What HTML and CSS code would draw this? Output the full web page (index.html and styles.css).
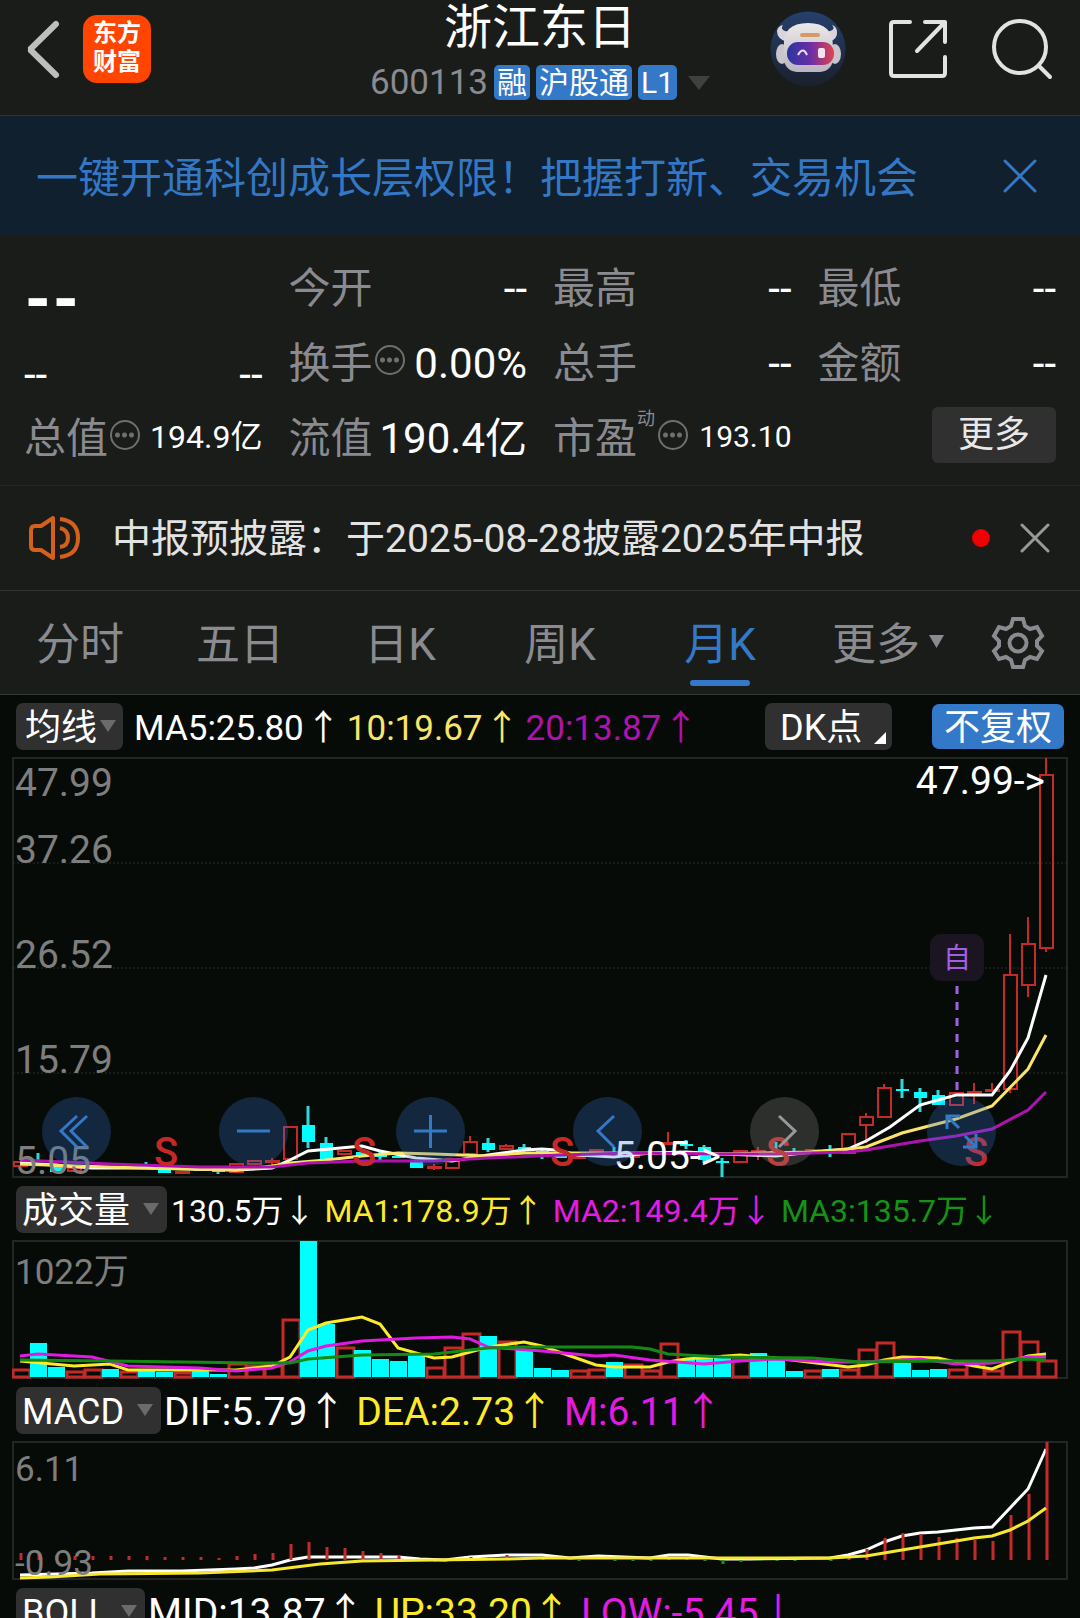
FILE: index.html
```html
<!DOCTYPE html>
<html lang="zh-CN">
<head>
    <meta charset="UTF-8">
    <meta name="viewport" content="width=device-width, initial-scale=1.0">
    <title>浙江东日 600113</title>
    <link rel="stylesheet" href="styles.css">
</head>
<body>

    <div class="page">
        <!-- 顶部导航 -->
        <header class="topbar">
            <div class="topbar-left">
                <button class="icon-btn" aria-label="返回">
                    <svg width="36" height="60" viewBox="0 0 36 60"><path d="M31 5 L5 30.500 L31 56" fill="none" stroke="#bebebe" stroke-width="6" stroke-linejoin="bevel" stroke-linecap="round"/></svg>
                </button>
                <a class="app-logo" href="#">东方<br>财富</a>
            </div>
            <div class="topbar-title">
                <h1>浙江东日</h1>
                <div class="stock-code">
                    <span class="code">600113</span>
                    <span class="tag">融</span>
                    <span class="tag">沪股通</span>
                    <span class="tag">L1</span>
                    <svg class="code-caret" width="22" height="14" viewBox="0 0 22 14"><path d="M0 0H22L11 14Z" fill="#40413f"/></svg>
                </div>
            </div>
            <div class="topbar-right">
                <button class="icon-btn" aria-label="智能助手">
                    <svg width="76" height="76" viewBox="0 0 76 76">
                        <defs>
                            <linearGradient id="sky" x1="0" y1="0" x2="0" y2="1"><stop offset="0" stop-color="#26406c"/><stop offset="1" stop-color="#1a202c"/></linearGradient>
                            <linearGradient id="visor" x1="0" y1="0" x2="1" y2="0"><stop offset="0" stop-color="#2b35a0"/><stop offset=".5" stop-color="#6a2fa6"/><stop offset="1" stop-color="#e0434f"/></linearGradient>
                            <linearGradient id="shell" x1="0" y1="0" x2="0" y2="1"><stop offset="0" stop-color="#ece9ea"/><stop offset="1" stop-color="#b9b5c0"/></linearGradient>
                        </defs>
                        <circle cx="38" cy="38" r="37.500" fill="url(#sky)"/>
                        <path d="M13 14 Q10 18 15 20 L20 21 L17 31 Q7 28 7 20 Q8 15 13 14Z" fill="#d9d5da"/>
                        <path d="M62 14 Q66 18 60 20 L56 21 L59 31 Q68 28 67 20 Q66 15 62 14Z" fill="#d9d5da"/>
                        <ellipse cx="12" cy="43" rx="6" ry="10" fill="#c9c5cc"/>
                        <ellipse cx="65" cy="43" rx="6" ry="10" fill="#c9c5cc"/>
                        <path d="M14 36 Q13 24 19 18 Q25 12 38 12 Q51 12 57 18 Q63 24 63 36 L64 46 Q62 60 50 61 H27 Q15 60 13 46Z" fill="url(#shell)"/>
                        <rect x="30" y="22" width="20" height="4" rx="2" fill="#d69a66"/>
                        <rect x="17" y="31" width="47" height="23" rx="11" fill="url(#visor)"/>
                        <path d="M28 44 Q33 35 37 44" fill="none" stroke="#f1dcf6" stroke-width="2"/>
                        <rect x="48" y="37" width="7" height="10" rx="2" fill="#f6e3f0"/>
                    </svg>
                </button>
                <button class="icon-btn" aria-label="分享">
                    <svg width="60" height="60" viewBox="0 0 60 60" fill="none" stroke="#e2e2e2" stroke-width="4" stroke-linecap="round" stroke-linejoin="round"><path d="M22 3H6Q3 3 3 6V54Q3 57 6 57H54Q57 57 57 54V38M37 3H57V23M57 3L29 32"/></svg>
                </button>
                <button class="icon-btn" aria-label="搜索">
                    <svg width="64" height="64" viewBox="0 0 64 64" fill="none" stroke="#e2e2e2" stroke-width="4" stroke-linecap="round"><circle cx="30" cy="30" r="26"/><path d="M49 49L60 60"/></svg>
                </button>
            </div>
        </header>

        <!-- 开户提示 -->
        <div class="promo">
            <a href="#">一键开通科创成长层权限！把握打新、交易机会</a>
            <button class="icon-btn" aria-label="关闭">
                <svg width="34" height="34" viewBox="0 0 34 34" stroke="#3477c4" stroke-width="3" stroke-linecap="round"><path d="M2 2L32 32M32 2L2 32"/></svg>
            </button>
        </div>

        <!-- 行情数据 -->
        <section class="quote">
            <div class="cell cell-price"><span class="price">--</span></div>
            <div class="cell"><span class="label">今开</span><span class="value">--</span></div>
            <div class="cell"><span class="label">最高</span><span class="value">--</span></div>
            <div class="cell"><span class="label">最低</span><span class="value">--</span></div>

            <div class="cell cell-price"><span class="value">--</span><span class="value">--</span></div>
            <div class="cell"><span class="label">换手<i class="dots"></i></span><span class="value">0.00%</span></div>
            <div class="cell"><span class="label">总手</span><span class="value">--</span></div>
            <div class="cell"><span class="label">金额</span><span class="value">--</span></div>

            <div class="cell"><span class="label">总值<i class="dots"></i></span><span class="value small">194.9亿</span></div>
            <div class="cell"><span class="label">流值</span><span class="value">190.4亿</span></div>
            <div class="cell"><span class="label">市盈<sup>动</sup><i class="dots"></i></span><span class="value smaller">193.10</span></div>
            <div class="cell cell-more"><button class="more-btn">更多</button></div>
        </section>

        <!-- 公告 -->
        <div class="notice">
            <svg width="52" height="46" viewBox="0 0 52 46" fill="none" stroke="#d4601c" stroke-width="4" stroke-linejoin="round"><path d="M24 3V43L12 35H6Q2 35 2 31V15Q2 11 6 11H12Z"/><path d="M31 13Q39 15 39 23T31 32M31 4Q49 6 49 23T31 42"/></svg>
            <a href="#">中报预披露：于2025-08-28披露2025年中报</a>
            <span class="red-dot"></span>
            <button class="icon-btn" aria-label="关闭公告">
                <svg width="30" height="30" viewBox="0 0 30 30" stroke="#999" stroke-width="3" stroke-linecap="round"><path d="M2 2L28 28M28 2L2 28"/></svg>
            </button>
        </div>

        <!-- 周期切换 -->
        <nav class="tabs">
            <button class="tab">分时</button>
            <button class="tab">五日</button>
            <button class="tab">日K</button>
            <button class="tab">周K</button>
            <button class="tab active">月K</button>
            <button class="tab tab-more">更多<svg width="15" height="13" viewBox="0 0 15 13"><path d="M0 0H15L7.500 13Z" fill="#8a8a90"/></svg></button>
            <button class="tab-setting" aria-label="设置">
                <svg width="54" height="54" viewBox="0 0 54 54" fill="none" stroke="#8a8a90" stroke-width="4"><path d="M22 3H32L34 10L39 13L46 11L51 20L46 25V30L51 35L46 43L39 41L34 44L32 51H22L20 44L15 41L8 43L3 35L8 30V25L3 20L8 11L15 13L20 10Z"/><circle cx="27" cy="27" r="8.500"/></svg>
            </button>
        </nav>

        <main class="charts">
            <!-- K线 -->
            <div class="legend legend-ma">
                <button class="pick pick-ma">均线<i class="caret"></i></button>
                <span class="c-white">MA5:25.80<b>↑</b></span>
                <span class="c-lemon">10:19.67<b>↑</b></span>
                <span class="c-purple">20:13.87<b>↑</b></span>
                <button class="pick pick-dk">DK点</button>
                <button class="pick pick-blue">不复权</button>
            </div>
            <div class="plot">
                <svg id="price-chart" viewBox="12 757 1056 421"></svg>
                <div class="chart-tools">
                    <button aria-label="最左"><svg viewBox="0 0 69 69"><path d="M35 19L19 34L35 50M45 19L29 34L45 50"/></svg></button>
                    <button aria-label="缩小"><svg viewBox="0 0 69 69"><path d="M18 34H51"/></svg></button>
                    <button aria-label="放大"><svg viewBox="0 0 69 69"><path d="M18 34H51M34.500 18V51"/></svg></button>
                    <button aria-label="左移"><svg viewBox="0 0 69 69"><path d="M41 19L25 34L41 50"/></svg></button>
                    <button aria-label="右移" class="off"><svg viewBox="0 0 69 69"><path d="M29 19L45 34L29 50"/></svg></button>
                    <button aria-label="全屏"><svg viewBox="0 0 69 69"><path d="M33 19H20V32M20 19L32 31M36 50H49V37M49 50L38 39"/></svg></button>
                </div>
            </div>

            <!-- 成交量 -->
            <div class="legend legend-vol">
                <button class="pick">成交量<i class="caret"></i></button>
                <span class="c-white">130.5万<b>↓</b></span>
                <span class="c-yellow">MA1:178.9万<b>↑</b></span>
                <span class="c-magenta">MA2:149.4万<b>↓</b></span>
                <span class="c-green">MA3:135.7万<b>↓</b></span>
            </div>
            <div class="plot"><svg id="volume-chart" viewBox="12 1240 1056 139"></svg></div>

            <!-- MACD -->
            <div class="legend">
                <button class="pick">MACD<i class="caret"></i></button>
                <span class="c-white">DIF:5.79<b>↑</b></span>
                <span class="c-yellow">DEA:2.73<b>↑</b></span>
                <span class="c-magenta">M:6.11<b>↑</b></span>
            </div>
            <div class="plot"><svg id="macd-chart" viewBox="12 1441 1056 139"></svg></div>

            <!-- BOLL -->
            <div class="legend">
                <button class="pick">BOLL<i class="caret"></i></button>
                <span class="c-white">MID:13.87<b>↑</b></span>
                <span class="c-yellow">UP:33.20<b>↑</b></span>
                <span class="c-magenta">LOW:-5.45<b>↓</b></span>
            </div>
        </main>
    </div>

    <script>
        // --- 图表公共设置 ---
        const STEP = 18;
        const FIRST_X = 20;
        const RED = '#c62a27';
        const CYAN = '#00ffff';
        const xOf = (i) => FIRST_X + i * STEP;

        // K线：[颜色, 实体上沿, 实体下沿, 最高, 最低]
        const candles = [
            ['r', 1162, 1166], ['c', 1160, 1162, 1153], ['c', 1166, 1172], ['r', 1168, 1171], ['c', 1167, 1168],
            ['c', 1167, 1169], ['c', 1167, 1168], ['c', 1166, 1168, 1162], ['c', 1169, 1173], ['r', 1172, 1173],
            ['c', 1170, 1171], ['c', 1171, 1172, 1171, 1174], ['r', 1164, 1172], ['r', 1161, 1164], ['r', 1161, 1162, 1158, 1165],
            ['r', 1127, 1159], ['c', 1125, 1142, 1106, 1148], ['c', 1143, 1160, 1137], ['r', 1151, 1154], ['c', 1152, 1156],
            ['c', 1155, 1157, 1152, 1160], ['c', 1156, 1158], ['c', 1162, 1168], ['r', 1167, 1168, 1164, 1170], ['r', 1159, 1168],
            ['r', 1142, 1154, 1136], ['c', 1143, 1150, 1138, 1152], ['r', 1146, 1149, 1144], ['c', 1147, 1149, 1144, 1153], ['c', 1151, 1153, 1150, 1159],
            ['c', 1156, 1158], ['r', 1157, 1158], ['r', 1150, 1152], ['c', 1152, 1155, 1147], ['r', 1156, 1157],
            ['r', 1153, 1154], ['r', 1143, 1144, 1132], ['c', 1144, 1146, 1140, 1149], ['c', 1147, 1160, 1145, 1163], ['c', 1161, 1163, 1158, 1177],
            ['r', 1151, 1162], ['r', 1151, 1152, 1147, 1160], ['c', 1151, 1153, 1142], ['c', 1151, 1153, 1148], ['r', 1150, 1151],
            ['c', 1150, 1152, 1145, 1157], ['r', 1134, 1153], ['r', 1117, 1125, 1113, 1143], ['r', 1088, 1117, 1084], ['c', 1089, 1091, 1079, 1098],
            ['c', 1092, 1098, 1088, 1112], ['c', 1095, 1105, 1090], ['r', 1093, 1105], ['r', 1092, 1093, 1083, 1104], ['r', 1090, 1091, 1083],
            ['r', 975, 1089, 934, 1093], ['r', 944, 985, 917, 997], ['r', 775, 948, 758, 952]
        ];

        // 成交量：[颜色, 柱顶]
        const volumes = [
            ['r', 1370], ['c', 1343], ['c', 1367], ['r', 1372], ['r', 1370], ['c', 1369], ['r', 1372], ['c', 1371], ['c', 1372], ['r', 1373],
            ['c', 1371], ['c', 1374], ['r', 1364], ['r', 1366], ['r', 1365], ['r', 1320], ['c', 1241], ['c', 1324], ['r', 1348], ['c', 1350],
            ['c', 1359], ['c', 1361], ['c', 1353], ['r', 1368], ['r', 1348], ['r', 1334], ['c', 1336], ['r', 1342], ['c', 1350], ['c', 1368],
            ['c', 1370], ['r', 1371], ['r', 1370], ['c', 1362], ['r', 1365], ['r', 1371], ['r', 1344], ['c', 1359], ['c', 1358], ['c', 1356],
            ['r', 1360], ['c', 1353], ['c', 1360], ['c', 1371], ['r', 1371], ['c', 1369], ['r', 1370], ['r', 1350], ['r', 1343], ['c', 1363],
            ['c', 1370], ['c', 1369], ['r', 1370], ['r', 1363], ['r', 1371], ['r', 1332], ['r', 1342], ['r', 1361]
        ];

        // MACD柱的端点，零轴在1560
        const ZERO = 1560;
        const macdBars = [
            1553, 1553, 1555, 1556, 1556, 1556, 1556, 1556, 1557, 1557, 1557, 1558, 1556, 1554, 1553,
            1544, 1542, 1547, 1548, 1551, 1553, 1555, 1560, 1562, 1561, 1557, 1557, 1555, 1557, 1558,
            1560, 1561, 1560, 1561, 1561, 1561, 1557, 1558, 1561, 1564, 1562, 1561, 1561, 1561, 1560,
            1561, 1557, 1549, 1538, 1533, 1534, 1537, 1538, 1540, 1541, 1515, 1494, 1442
        ];

        // --- 绘图函数 ---
        const line = (points, color) =>
            `<polyline points="${points}" fill="none" stroke="${color}" stroke-width="3"/>`;

        const vline = (x, y1, y2, color, width) =>
            `<path d="M${x} ${y1}V${y2}" stroke="${color}" stroke-width="${width}"/>`;

        const text = (x, y, str, cls) => `<text x="${x}" y="${y}" class="${cls}">${str}</text>`;

        const frame = (y, h) =>
            `<rect x="13" y="${y}" width="1054" height="${h}" fill="none" stroke="#232623" stroke-width="2"/>`;

        function candle([type, top, bottom, high = top, low = bottom], i) {
            const x = xOf(i);
            if (type === 'c') {
                return vline(x, high, low, '#2fd9d9', 3) +
                    `<rect x="${x - 6}" y="${top}" width="13" height="${bottom - top}" fill="${CYAN}"/>`;
            }
            return vline(x, high, top, RED, 2) + vline(x, bottom, low, RED, 2) +
                `<rect x="${x - 6}" y="${top}" width="13" height="${bottom - top}" fill="none" stroke="${RED}" stroke-width="2"/>`;
        }

        function volumeBar([type, top], i) {
            const x = xOf(i);
            if (type === 'c') {
                return `<rect x="${x - 8}" y="${top}" width="17" height="${1377 - top}" fill="${CYAN}"/>`;
            }
            return `<rect x="${x - 7}" y="${top}" width="17" height="${1377 - top}" fill="none" stroke="${RED}" stroke-width="3"/>`;
        }

        // --- K线图 ---
        let price = frame(758, 419);
        [863, 968, 1073].forEach((y) => {
            price += `<path d="M13 ${y}H1067" stroke="#2b2e2b" stroke-dasharray="2 2"/>`;
        });
        price += candles.map(candle).join('');
        price += line('20,1163 56,1165 92,1168 146,1168 200,1169 236,1170 272,1168 290,1160 308,1151 362,1146 380,1151 416,1158 452,1161 488,1155 524,1150 542,1149 556,1150 578,1155 614,1157 650,1153 686,1152 722,1154 776,1156 812,1152 848,1149 866,1141 890,1127 920,1105 956,1095 992,1095 1010,1071 1028,1038 1046,975', '#fff');
        price += line('20,1164 74,1166 182,1169 236,1170 272,1166 290,1163 326,1160 362,1156 398,1153 434,1154 488,1156 524,1153 580,1153 650,1153 722,1154 812,1152 848,1149 866,1147 902,1133 956,1119 992,1106 1028,1069 1046,1035', '#fbe46a');
        price += line('20,1160 110,1164 200,1167 272,1167 308,1163 362,1161 434,1161 488,1158 560,1155 632,1153 722,1154 776,1154 848,1152 866,1150 920,1141 956,1136 992,1129 1028,1110 1046,1092', '#b012b0');
        price += '<path d="M957 986V1092" stroke="#a45ee5" stroke-width="3" stroke-dasharray="8 8"/>';
        price += '<rect x="930" y="934" width="54" height="47" rx="11" fill="#1b1522"/>';
        price += text(957, 968, '自', 'mark');
        price += [166, 364, 562, 778, 976].map((x) => text(x, 1166, 'S', 'sell')).join('');
        price += text(15, 796, '47.99', 'axis') + text(15, 863, '37.26', 'axis') +
            text(15, 968, '26.52', 'axis') + text(15, 1073, '15.79', 'axis') + text(15, 1174, '5.05', 'axis');
        price += text(1045, 794, '47.99-&gt;', 'peak') + text(721, 1169, '5.05-&gt;', 'peak');
        document.getElementById('price-chart').innerHTML = price;

        // --- 成交量图 ---
        let volume = frame(1241, 137) + volumes.map(volumeBar).join('');
        volume += line('20,1361 74,1366 110,1364 128,1370 200,1370 236,1370 272,1366 290,1357 308,1330 326,1323 362,1317 380,1324 398,1348 434,1358 452,1357 470,1352 488,1347 524,1342 542,1346 596,1365 614,1367 650,1367 668,1362 686,1359 740,1355 776,1358 848,1367 866,1365 884,1360 902,1357 938,1358 974,1366 992,1369 1010,1362 1028,1356 1046,1354', '#fdea2a');
        volume += line('20,1356 38,1354 92,1357 128,1366 200,1368 236,1371 272,1368 290,1362 308,1351 326,1346 362,1341 416,1338 452,1337 470,1339 488,1347 542,1351 596,1356 614,1355 650,1360 704,1364 740,1361 776,1359 830,1362 866,1362 920,1359 956,1364 992,1363 1028,1357 1046,1357', '#e01be0');
        volume += line('20,1360 110,1361 182,1362 254,1363 290,1363 308,1359 362,1355 434,1354 488,1348 524,1347 632,1347 650,1349 668,1354 722,1357 812,1358 860,1362 938,1361 992,1361 1028,1359 1046,1360', '#138a13');
        volume += text(15, 1284, '1022万', 'axis axis-small');
        document.getElementById('volume-chart').innerHTML = volume;

        // --- MACD图 ---
        let macd = frame(1442, 137);
        macd += line('20,1575 92,1573 128,1571 182,1571 236,1569 254,1568 272,1565 290,1560 308,1557 398,1557 420,1559 445,1560 470,1557 506,1555 542,1555 570,1558 598,1556 650,1558 669,1555 688,1555 722,1559 750,1559 830,1558 848,1555 866,1550 884,1542 902,1536 920,1533 938,1532 974,1528 992,1527 1010,1508 1028,1489 1046,1449', '#fff');
        macd += macdBars.map((y, i) => vline(xOf(i) + 1, y, ZERO, y > ZERO ? '#17911a' : RED, 3)).join('');
        macd += line('20,1578 50,1577 100,1574 200,1573 272,1570 320,1564 362,1561 434,1560 506,1559 542,1558 830,1558 866,1556 902,1550 938,1544 974,1538 992,1536 1010,1530 1028,1521 1046,1508', '#f7e733');
        macd += text(15, 1481, '6.11', 'axis axis-small') + text(15, 1575, '-0.93', 'axis axis-small');
        document.getElementById('macd-chart').innerHTML = macd;
    </script>
</body>
</html>
```
FILE: styles.css
```css
/* 全体样式 */
* {
    box-sizing: border-box;
}

body {
    margin: 0;
    background-color: #191c19;
    color: #fff;
    font-family: Roboto, "Noto Sans CJK SC", sans-serif;
    line-height: 1;
}

button {
    font-family: inherit;
    line-height: 1;
    border: none;
    padding: 0;
    background: none;
    cursor: pointer;
}

a {
    color: inherit;
    text-decoration: none;
}

svg {
    display: block;
}

.page {
    height: 100vh;
    overflow: hidden;
}

/* 顶部导航 */
.topbar {
    display: grid;
    grid-template-columns: 1fr auto 1fr;
    height: 116px;
    border-bottom: 1px solid #30332f;
}

.topbar-left,
.topbar-right {
    display: flex;
    align-items: center;
    height: 97px;
}

.topbar-left {
    padding-left: 25px;
    gap: 22px;
}

.topbar-right {
    justify-content: flex-end;
    padding-right: 26px;
    gap: 42px;
}

.app-logo {
    width: 68px;
    height: 68px;
    padding-top: 4px;
    border-radius: 14px;
    background-color: #ff4500;
    font-size: 24px;
    font-weight: bold;
    line-height: 29px;
    text-align: center;
}

.topbar-title {
    text-align: center;
}

h1 {
    margin: 0;
    font-size: 48px;
    font-weight: normal;
    line-height: 56px;
}

.stock-code {
    display: flex;
    align-items: center;
    justify-content: center;
    gap: 6px;
    margin-top: 9px;
}

.code {
    color: #8a8a90;
    font-size: 35px;
}

.tag {
    height: 35px;
    padding: 0 3px;
    border-radius: 5px;
    background-color: #3478c8;
    font-size: 30px;
    line-height: 35px;
}

.code-caret {
    margin-left: 5px;
}

/* 开户提示 */
.promo {
    display: flex;
    align-items: center;
    justify-content: space-between;
    height: 120px;
    padding: 0 43px 0 36px;
    background-color: #10202e;
    color: #3477c4;
    font-size: 42px;
}

.promo a {
    padding-top: 6px;
}

/* 行情数据 */
.quote {
    display: grid;
    grid-template-columns: repeat(4, 1fr);
    grid-auto-rows: 75px;
    column-gap: 26px;
    padding: 15px 24px 9px;
    border-bottom: 1px solid #242724;
}

.cell {
    display: flex;
    align-items: center;
    justify-content: space-between;
    white-space: nowrap;
}

.cell-price {
    padding-top: 22px;
}

.cell-more {
    justify-content: flex-end;
    padding-bottom: 7px;
}

.label {
    display: flex;
    align-items: center;
    color: #8a8a90;
    font-size: 42px;
}

.label sup {
    align-self: flex-start;
    margin: -8px 1px 0 0;
    font-size: 18px;
    line-height: 18px;
}

.value {
    font-size: 42px;
}

.value.small {
    padding-bottom: 3px;
    font-size: 32px;
}

.value.smaller {
    padding-bottom: 3px;
    font-size: 30px;
}

.price {
    font-size: 62px;
    font-weight: 900;
}

/* 圆圈里的三个点 */
.dots {
    width: 30px;
    height: 30px;
    margin: 0 0 8px 2px;
    border: 2px solid #6f6f6c;
    border-radius: 50%;
    background:
        radial-gradient(circle, #6f6f6c 2px, transparent 3px) 2px 0 / 7px 100% repeat-x;
    background-clip: content-box;
    padding: 0 2px;
}

.more-btn {
    width: 124px;
    height: 56px;
    border-radius: 6px;
    background-color: #303030;
    color: #e8e8e8;
    font-size: 36px;
}

/* 公告 */
.notice {
    display: flex;
    align-items: center;
    height: 105px;
    padding: 0 30px 0 29px;
    border-bottom: 1px solid #333633;
    color: #e3e3e3;
    font-size: 39px;
}

.notice a {
    flex: 1;
    padding-top: 2px;
    margin-left: 31px;
    white-space: nowrap;
}

.red-dot {
    width: 18px;
    height: 18px;
    margin-right: 30px;
    border-radius: 50%;
    background-color: #f00000;
}

/* 周期切换 */
.tabs {
    display: grid;
    grid-template-columns: repeat(6, 1fr) 120px;
    height: 104px;
    border-bottom: 1px solid #333633;
}

.tab {
    position: relative;
    padding-top: 4px;
    color: #8a8a90;
    font-size: 44px;
}

.tab.active {
    color: #3478c8;
}

.tab.active::after {
    content: "";
    position: absolute;
    left: 50%;
    bottom: 8px;
    width: 60px;
    height: 6px;
    margin-left: -30px;
    border-radius: 3px;
    background-color: #3478c8;
}

.tab-more {
    display: flex;
    align-items: center;
    justify-content: center;
    gap: 9px;
    padding-left: 16px;
}

.tab-more svg {
    margin-bottom: 6px;
}

.tab-setting {
    display: flex;
    align-items: center;
    justify-content: center;
    padding-right: 4px;
}

/* 图表区 */
.charts {
    background-color: #070b08;
}

.legend {
    display: flex;
    align-items: center;
    gap: 10px;
    height: 62px;
    padding: 0 16px;
    font-size: 39px;
    white-space: nowrap;
}

.legend b {
    font-family: "Noto Sans CJK SC", sans-serif;
    font-weight: normal;
}

.legend .pick + span {
    margin-left: -7px;
}

.legend-ma {
    gap: 4px;
    font-size: 35px;
}

.legend-ma b {
    margin: 0 2px;
}

.legend-ma .pick + span {
    margin-left: 7px;
}

.legend-vol {
    gap: 9px;
    font-size: 32px;
}

.legend-vol .pick + span {
    margin-left: -5px;
}

.c-white { color: #fff; }
.c-lemon { color: #fbe46a; }
.c-yellow { color: #fdea2a; }
.c-purple { color: #b012b0; }
.c-magenta { color: #e41be4; }
.c-green { color: #159315; }

/* 指标选择按钮 */
.pick {
    display: flex;
    align-items: center;
    gap: 13px;
    height: 47px;
    padding: 4px 8px 0 6px;
    border-radius: 7px;
    background-color: #303030;
    color: #fff;
    font-size: 36px;
}

.pick-ma {
    gap: 3px;
    padding-left: 9px;
}

.caret {
    margin-bottom: 4px;
    border: 8px solid transparent;
    border-top: 12px solid #6b6c69;
    border-bottom: 0;
}

.pick-ma .caret {
    margin-right: -1px;
}

.pick-dk {
    position: relative;
    width: 127px;
    margin-left: auto;
    padding-left: 15px;
}

.pick-dk::after {
    content: "";
    position: absolute;
    right: 6px;
    bottom: 6px;
    border-left: 12px solid transparent;
    border-bottom: 12px solid #fff;
}

.pick-blue {
    width: 132px;
    height: 45px;
    margin-left: 36px;
    padding: 4px 0 0;
    justify-content: center;
    background-color: #3478c8;
}

.plot {
    position: relative;
    margin: 0 12px;
}

.plot svg {
    width: 100%;
}

/* 图表文字 */
.axis {
    fill: #7e7e7e;
    font-size: 39px;
}

.axis-small {
    font-size: 35px;
}

.peak {
    fill: #fff;
    font-size: 39px;
    text-anchor: end;
}

.sell {
    fill: #c62826;
    font-size: 40px;
    font-weight: 500;
    text-anchor: middle;
}

.mark {
    fill: #a45ee5;
    font-size: 28px;
    text-anchor: middle;
}

/* K线图上的操作按钮 */
.chart-tools {
    position: absolute;
    left: 30px;
    right: 72px;
    bottom: 12px;
    display: flex;
    justify-content: space-between;
}

.chart-tools button {
    width: 69px;
    height: 69px;
    border-radius: 50%;
    background-color: rgba(52, 120, 211, 0.27);
}

.chart-tools .off {
    background-color: rgba(145, 145, 145, 0.27);
}

.chart-tools path {
    fill: none;
    stroke: #3478c8;
    stroke-width: 3;
}

.chart-tools .off path {
    stroke: #98989c;
}
```
